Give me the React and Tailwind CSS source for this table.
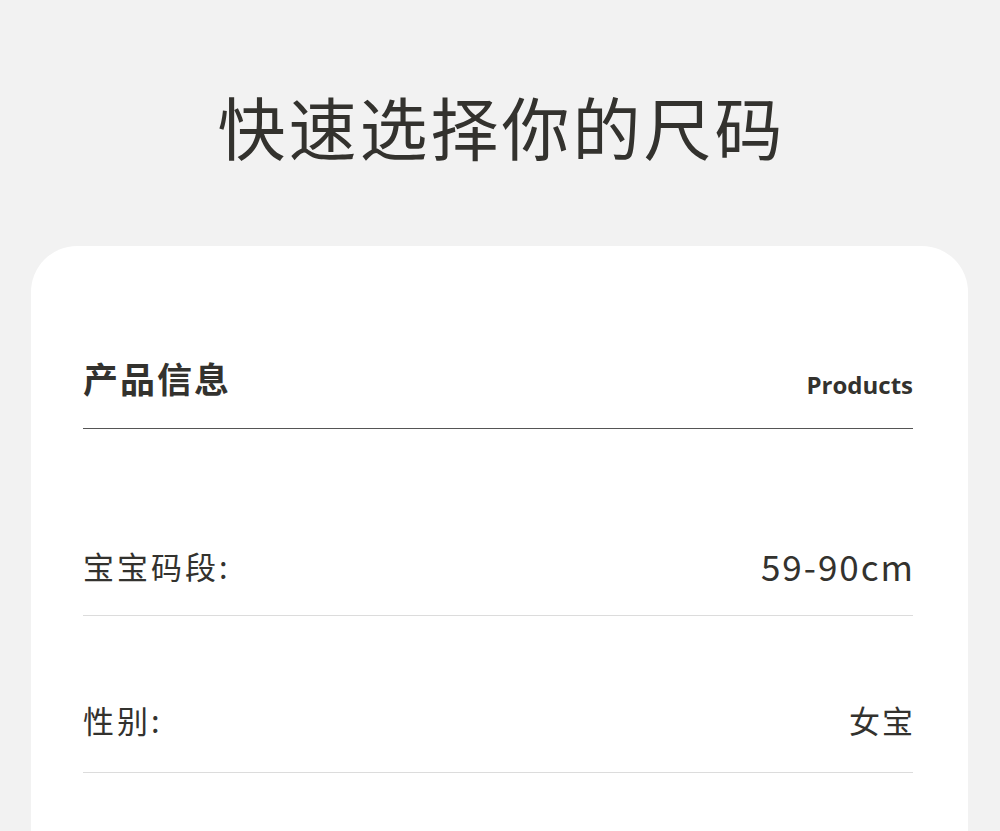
import React from 'react';

const rows = [
  { label: '宝宝码段:', value: '59-90cm', size: 'text-[35px]' },
  { label: '性别:', value: '女宝', size: 'text-[31px]' },
];

const cjk = { fontFamily: '"Noto Sans CJK SC", "Noto Sans", sans-serif' };

const App = () => {
  return (
    <div className="bg-[#f2f2f2] min-h-[831px] h-[831px] overflow-hidden text-[#33322e]" style={cjk}>
      {/* Title */}
      <div className="pt-[92px] h-[246px]">
        <h1 className="text-center text-[68px] leading-[68px] tracking-[3px] pl-[3px] font-normal">
          快速选择你的尺码
        </h1>
      </div>

      {/* Card */}
      <div className="ml-[31px] mr-[32px] bg-white rounded-t-[46px] h-[600px] pl-[52px] pr-[55px] pt-[112px]">
        <div className="flex justify-between items-end border-b border-[#555] pb-[30px]">
          <span className="text-[35px] leading-[40px] font-bold tracking-[2px]">产品信息</span>
          <span className="text-[24px] leading-[30px] font-bold -mb-[2px]" style={{ fontFamily: '"Open Sans", sans-serif' }}>
            Products
          </span>
        </div>

        {rows.map((row, i) => (
          <div
            key={row.label}
            className={`flex justify-between items-center border-b border-[#dcdcdc] ${i === 0 ? 'pt-[117px] pb-[29px]' : 'pt-[84px] pb-[32px]'}`}
          >
            <span className="text-[31px] leading-[40px] tracking-[3px]">{row.label}</span>
            <span className={`${row.size} leading-[40px] tracking-[2px] -mr-[2px]`}>{row.value}</span>
          </div>
        ))}
      </div>
    </div>
  );
};

export default App;
